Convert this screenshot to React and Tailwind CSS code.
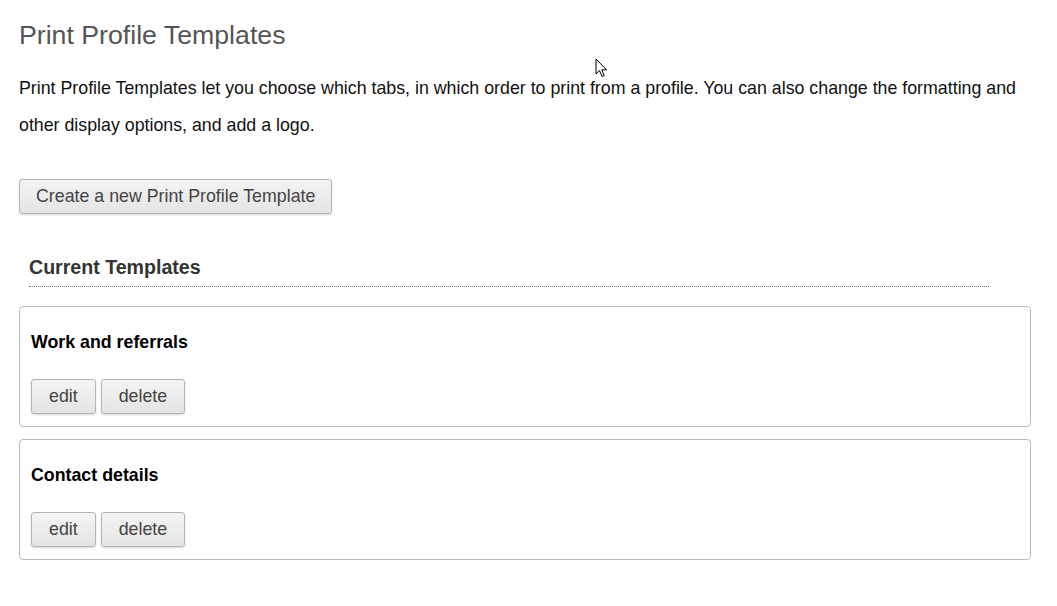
import React from 'react'

const templates = [
  { id: 1, name: 'Work and referrals' },
  { id: 2, name: 'Contact details' },
]

function Button({ children, className = '' }) {
  return (
    <button
      className={`h-[35px] rounded-[3px] border border-[#b4b4b4] bg-gradient-to-b from-[#f4f4f4] to-[#e4e4e4] text-[17.8px] leading-none text-[#444] shadow-[0_1px_2px_rgba(0,0,0,0.15)] ${className}`}
    >
      {children}
    </button>
  )
}

function Cursor() {
  return (
    <svg className="absolute left-[595px] top-[58px]" width="14" height="22" viewBox="0 0 14 22">
      <path
        d="M1 1 L1 16 L4.5 12.5 L7 18.5 L9.2 17.6 L6.8 11.8 L11.5 11.8 Z"
        fill="#fff"
        stroke="#000"
        strokeWidth="1"
        strokeLinejoin="miter"
      />
    </svg>
  )
}

export default function App() {
  return (
    <div className="relative min-h-[606px] bg-white px-[19px] font-['Liberation_Sans',Arial,sans-serif]">
      <Cursor />
      <div className="w-[1012px] pb-[40px]">
        <h1 className="pt-[20px] text-[26.7px] leading-[30px] font-normal text-[#555]">Print Profile Templates</h1>

        <p className="mt-[20px] text-[17.8px] leading-[37px] text-[#111]">
          Print Profile Templates let you choose which tabs, in which order to print from a profile. You can also change the
          formatting and other display options, and add a logo.
        </p>

        <Button className="mt-[35px] px-[16px]">Create a new Print Profile Template</Button>

        <h2 className="mt-[43px] ml-[10px] w-[960px] border-b border-dotted border-[#777] pb-[9px] text-[19.6px] leading-[20px] font-bold text-[#333]">
          Current Templates
        </h2>

        <div className="mt-[19px] flex flex-col gap-[12px]">
          {templates.map((t) => (
            <div key={t.id} className="rounded-[4px] border border-[#bbb] px-[11px] pt-[25px] pb-[12px]">
              <h3 className="text-[17.8px] leading-[20px] font-bold text-black">{t.name}</h3>
              <div className="mt-[27px] flex gap-[5px]">
                <Button className="px-[17px]">edit</Button>
                <Button className="px-[17px]">delete</Button>
              </div>
            </div>
          ))}
        </div>
      </div>
    </div>
  )
}
